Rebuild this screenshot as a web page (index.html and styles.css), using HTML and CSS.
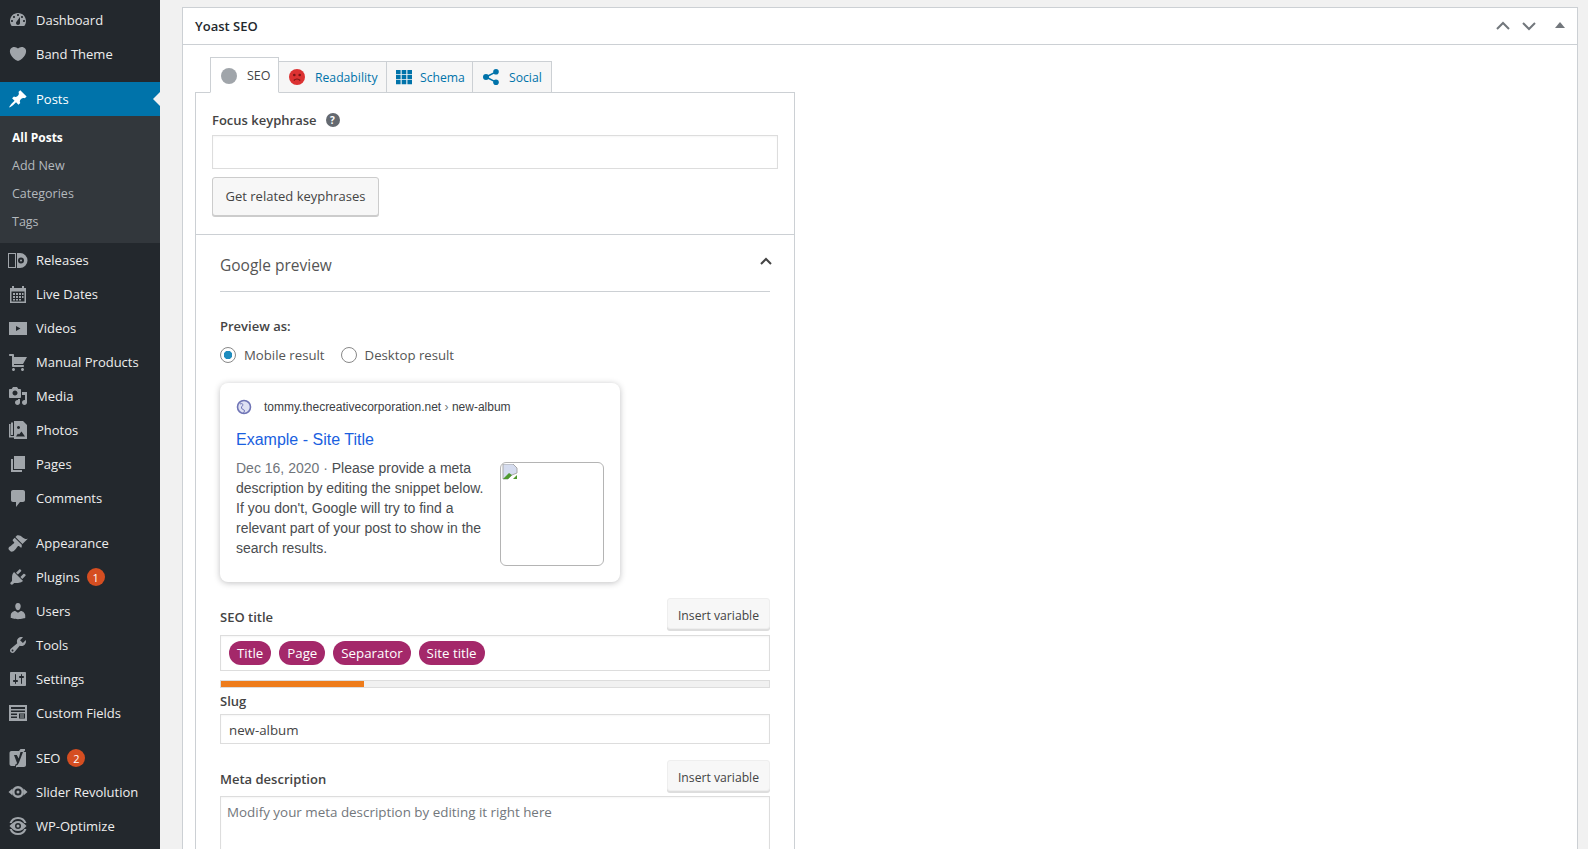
FILE: index.html
```html
<!DOCTYPE html>
<html lang="en">
<head>
<meta charset="utf-8">
<title>Edit Post</title>
<link rel="stylesheet" href="styles.css">
</head>
<body>
<div class="app">
<nav class="sidebar">
  <ul class="menu">
    <li class="item"><svg class="ico" viewBox="0 0 20 20"><path fill-rule="evenodd" d="M3.76 16h12.48c1.1-1.37 1.76-3.11 1.76-5 0-4.42-3.58-8-8-8s-8 3.58-8 8c0 1.89.66 3.63 1.76 5zM10 4c.55 0 1 .45 1 1s-.45 1-1 1-1-.45-1-1 .45-1 1-1zM6 6c.55 0 1 .45 1 1s-.45 1-1 1-1-.45-1-1 .45-1 1-1zm8 0c.55 0 1 .45 1 1s-.45 1-1 1-1-.45-1-1 .45-1 1-1zm-5.37 5.55L12 7v6c0 1.1-.9 2-2 2s-2-.9-2-2c0-.57.24-1.08.63-1.45zM4 10c.55 0 1 .45 1 1s-.45 1-1 1-1-.45-1-1 .45-1 1-1zm12 0c.55 0 1 .45 1 1s-.45 1-1 1-1-.45-1-1 .45-1 1-1z"/></svg>Dashboard</li>
    <li class="item"><svg class="ico" viewBox="0 0 20 20"><path d="M10 17.12c3.33-1.4 5.74-3.79 7.04-6.21 1.28-2.41 1.46-4.81.32-6.25-1.03-1.29-2.37-1.78-3.73-1.74s-2.68.63-3.63 1.46c-.95-.83-2.27-1.42-3.63-1.46s-2.7.45-3.73 1.74c-1.14 1.44-.96 3.84.32 6.25 1.3 2.42 3.71 4.81 7.04 6.21z"/></svg>Band Theme</li>
  </ul>
  <ul class="menu gap">
    <li class="item active"><svg class="ico" viewBox="0 0 20 20"><path d="M10.44 3.02l1.82-1.82 6.36 6.35-1.83 1.82c-1.05-.68-2.48-.57-3.41.36l-.75.75c-.92.93-1.04 2.35-.35 3.41l-1.83 1.82-2.41-2.41-2.8 2.79c-.42.42-3.38 2.71-3.8 2.29s1.86-3.39 2.28-3.81l2.79-2.79L4.1 9.36l1.83-1.82c1.05.69 2.48.57 3.4-.36l.75-.75c.93-.92 1.05-2.35.36-3.41z"/></svg>Posts</li>
    <li class="sub">
      <a class="subitem current">All Posts</a>
      <a class="subitem">Add New</a>
      <a class="subitem">Categories</a>
      <a class="subitem">Tags</a>
    </li>
    <li class="item"><svg class="ico" viewBox="0 0 20 20"><path fill-rule="evenodd" d="M0 3h8v15H0zM1 4v13h6V4zM9 3h3a7.5 7.5 0 0 1 0 15H9zM13 7.5a3 3 0 1 0 0 6 3 3 0 0 0 0-6zM13 9.5a1 1 0 1 1 0 2 1 1 0 0 1 0-2z"/></svg>Releases</li>
    <li class="item"><svg class="ico" viewBox="0 0 20 20"><path fill-rule="evenodd" d="M2 4h2V2h2v2h8V2h2v2h2v15H2zM3.5 7.5v10h13v-10zM5 9h2v2H5zM8 9h2v2H8zM11 9h2v2h-2zM14 9h1.5v2H14zM5 12h2v2H5zM8 12h2v2H8zM11 12h2v2h-2zM14 12h1.5v2H14zM5 15h2v1.5H5zM8 15h2v1.5H8zM11 15h2v1.5h-2z"/></svg>Live Dates</li>
    <li class="item"><svg class="ico" viewBox="0 0 20 20"><path fill-rule="evenodd" d="M1 4h18v13H1zM8 8v5l4.500-2.500z"/></svg>Videos</li>
    <li class="item"><svg class="ico" viewBox="0 0 20 20"><path d="M6 13h9c.55 0 1 .45 1 1s-.45 1-1 1H5c-.55 0-1-.45-1-1V4H2c-.55 0-1-.45-1-1s.45-1 1-1h3c.55 0 1 .45 1 1v2h13l-4 7H6v1zm-.5 3c.83 0 1.500.67 1.500 1.500S6.330 19 5.500 19 4 18.330 4 17.500 4.670 16 5.500 16zm9 0c.83 0 1.500.67 1.500 1.500s-.67 1.500-1.500 1.500-1.500-.67-1.500-1.500.67-1.500 1.500-1.500z"/></svg>Manual Products</li>
    <li class="item"><svg class="ico" viewBox="0 0 20 20"><path fill-rule="evenodd" d="M13 11V4c0-.55-.45-1-1-1h-1.670L9 1H5L3.670 3H2c-.55 0-1 .45-1 1v7c0 .55.45 1 1 1h10c.55 0 1-.45 1-1zM7 4.500c1.380 0 2.500 1.120 2.500 2.500S8.380 9.500 7 9.500 4.500 8.380 4.500 7 5.620 4.500 7 4.500zM14 6h5v10.500c0 1.380-1.120 2.500-2.500 2.500S14 17.880 14 16.500s1.120-2.500 2.500-2.500c.17 0 .34.02.5.05V9h-3V6zm-4 8.050V13h2v3.500c0 1.380-1.120 2.500-2.500 2.500S7 17.880 7 16.500 8.120 14 9.500 14c.17 0 .34.02.5.05z"/></svg>Media</li>
    <li class="item"><svg class="ico" viewBox="0 0 20 20"><path fill-rule="evenodd" d="M6 1h9l4 4v14H6zM10.500 6a1.500 1.500 0 1 0 .01 0zM8 16.500h9l-3.500-5-2.500 3-1-1zM1 4h1.500v12H6v1.500H1zM3 2.500h2V15H3z"/></svg>Photos</li>
    <li class="item"><svg class="ico" viewBox="0 0 20 20"><path d="M6 15V2h11v13H6zm-1 1h9v2H3V5h2v11z"/></svg>Pages</li>
    <li class="item"><svg class="ico" viewBox="0 0 20 20"><path d="M5 2h10c1.100 0 2 .9 2 2v8c0 1.100-.9 2-2 2h-3l-4 5v-5H5c-1.100 0-2-.9-2-2V4c0-1.100.9-2 2-2z"/></svg>Comments</li>
  </ul>
  <ul class="menu gap">
    <li class="item"><svg class="ico" viewBox="0 0 20 20"><path d="M14.480 11.060L7.410 3.990l1.500-1.500c.5-.56 2.300-.47 3.510.32 1.210.8 1.430 1.280 2.910 2.100 1.180.64 2.450 1.260 4.450.85zm-.71.71L6.700 4.700 4.930 6.470c-.39.39-.39 1.020 0 1.410l1.060 1.060c.39.39.39 1.030 0 1.420-.6.6-1.430 1.110-2.210 1.690-.35.26-.7.53-1.010.84C1.430 13.230.5 14.400.5 15.600c0 .45.16.89.48 1.210l1.410 1.410c.32.32.76.48 1.210.48 1.200 0 2.370-.93 3.710-2.270.31-.31.58-.66.84-1.010.58-.78 1.090-1.610 1.690-2.210.39-.39 1.030-.39 1.420 0l1.060 1.060c.39.39 1.020.39 1.410 0z"/></svg>Appearance</li>
    <li class="item"><svg class="ico" viewBox="0 0 20 20"><path d="M13.110 4.360L9.870 7.600 8 5.730l3.240-3.240c.35-.34 1.050-.2 1.560.32.52.51.66 1.210.31 1.550zm-8 1.770l.91-1.120 9.010 9.010-1.190.84c-.71.71-2.630 1.160-3.820 1.160H6.140L4.900 17.260c-.59.59-1.540.59-2.120 0-.59-.58-.59-1.530 0-2.120l1.240-1.240v-3.880c0-1.130.4-3.190 1.090-3.890zm7.260 3.970l3.240-3.240c.34-.35 1.040-.21 1.550.31.52.51.66 1.210.31 1.550l-3.240 3.250z"/></svg>Plugins<span class="badge">1</span></li>
    <li class="item"><svg class="ico" viewBox="0 0 20 20"><path d="M10 9.250c-2.270 0-2.730-3.440-2.730-3.440C7 4.020 7.820 2 9.970 2c2.160 0 2.980 2.020 2.710 3.810 0 0-.41 3.440-2.680 3.440zm0 2.570L12.720 10c2.390 0 4.520 2.330 4.520 4.530v2.490s-3.650 1.130-7.240 1.130c-3.650 0-7.240-1.130-7.240-1.130v-2.490c0-2.250 1.940-4.480 4.470-4.480z"/></svg>Users</li>
    <li class="item"><svg class="ico" viewBox="0 0 20 20"><path fill-rule="evenodd" d="M16.680 9.770c-1.340 1.340-3.300 1.670-4.950.99l-5.410 6.520c-.99.99-2.590.99-3.580 0s-.99-2.590 0-3.570l6.520-5.420c-.68-1.650-.35-3.610.99-4.950 1.280-1.280 3.120-1.620 4.720-1.060l-2.890 2.890 2.820 2.820 2.860-2.870c.53 1.580.18 3.390-1.080 4.650zM3.810 16.210c.4.39 1.040.39 1.430 0 .4-.4.4-1.040 0-1.430-.39-.4-1.030-.4-1.430 0-.39.39-.39 1.030 0 1.430z"/></svg>Tools</li>
    <li class="item"><svg class="ico" viewBox="0 0 20 20"><path fill-rule="evenodd" d="M18 16V4c0-.55-.45-1-1-1H3c-.55 0-1 .45-1 1v12c0 .55.45 1 1 1h14c.55 0 1-.45 1-1zM8 11h1c.55 0 1 .45 1 1s-.45 1-1 1H8v1.500c0 .28-.22.5-.5.5s-.5-.22-.5-.5V13H6c-.55 0-1-.45-1-1s.45-1 1-1h1V5.500c0-.28.22-.5.5-.5s.5.22.5.5V11zm5-2h-1c-.55 0-1-.45-1-1s.45-1 1-1h1V5.500c0-.28.22-.5.5-.5s.5.22.5.5V7h1c.55 0 1 .45 1 1s-.45 1-1 1h-1v5.500c0 .28-.22.5-.5.5s-.5-.22-.5-.5V9z"/></svg>Settings</li>
    <li class="item"><svg class="ico" viewBox="0 0 20 20"><path fill-rule="evenodd" d="M1 2h18v16H1zM3 4v2h14V4zM3 7.500V9h14V7.500zM3 10.500V12h6v-1.500zM11 10.500v5h6v-5zM12 11.500h4v1h-4zM12 13.500h4v1h-4zM3 13.500V15h6v-1.500z"/></svg>Custom Fields</li>
  </ul>
  <ul class="menu gap">
    <li class="item"><svg class="ico" viewBox="0 0 20 20"><path fill-rule="evenodd" d="M3.500 3H11l1.500-2H17v1.500L15.500 4H18v13c0 1-.8 2-2 2H9.500L8 19.500V18H3.500C2.300 18 1.500 17 1.500 16V5c0-1.200.8-2 2-2zM6 7l3 8c-.3 1-1 1.500-2 1.800V18c2-.3 3.200-1.500 4-3.500L15 4h-2.500l-1.800 6.500L8.800 7z"/></svg>SEO<span class="badge">2</span></li>
    <li class="item"><svg class="ico" viewBox="0 0 20 20"><path fill-rule="evenodd" d="M10 4a6 6 0 1 1 0 12 6 6 0 0 1 0-12zM10 6.500a3.500 3.500 0 1 0 0 7 3.500 3.500 0 0 0 0-7z"/><path d="M.5 10l4-3.500v7zM19.500 10l-4-3.500v7z"/><circle cx="10" cy="10" r="1.500"/></svg>Slider Revolution</li>
    <li class="item"><svg class="ico" viewBox="0 0 20 20"><path fill-rule="evenodd" d="M10 1a9 9 0 0 1 8.500 6h-2.200A7 7 0 0 0 3.700 7H1.500A9 9 0 0 1 10 1zM1.500 13h2.200a7 7 0 0 0 12.600 0h2.200a9 9 0 0 1-17 0zM10 5c3 0 6 2 8.500 5-2.500 3-5.500 5-8.500 5s-6-2-8.500-5C4 7 7 5 10 5zM10 7a3 3 0 1 0 0 6 3 3 0 0 0 0-6z"/><circle cx="10" cy="10" r="1.500"/></svg>WP-Optimize</li>
  </ul>
</nav>
<main class="content">
  <section class="metabox">
    <header class="mb-head">
      <h2 class="mb-title">Yoast SEO</h2>
      <div class="mb-actions">
        <svg class="chev" viewBox="0 0 16 10"><path d="M2 8l6-6 6 6"/></svg>
        <svg class="chev" viewBox="0 0 16 10"><path d="M2 2l6 6 6-6"/></svg>
        <span class="tri"></span>
      </div>
    </header>
    <div class="mb-body">
      <div class="tabs">
        <div class="tab on"><span class="dot"></span>SEO</div>
        <div class="tab tab-read"><svg class="tab-ico" viewBox="0 0 16 16"><circle cx="8" cy="8" r="8" fill="#dc3232"/><circle cx="5.300" cy="6" r="1.300" fill="#7a1515"/><circle cx="10.700" cy="6" r="1.300" fill="#7a1515"/><path d="M4.800 11.500c1.800-2 4.600-2 6.400 0" fill="none" stroke="#7a1515" stroke-width="1.200"/></svg>Readability</div>
        <div class="tab tab-schema"><svg class="tab-ico" viewBox="0 0 16 16"><path fill="#0073aa" d="M0 1h4.600v4.200H0zM5.700 1h4.600v4.200H5.700zM11.400 1H16v4.200h-4.600zM0 6h4.600v4.200H0zM5.700 6h4.600v4.200H5.700zM11.400 6H16v4.200h-4.600zM0 11h4.600v4.200H0zM5.700 11h4.600v4.200H5.700zM11.400 11H16v4.200h-4.600z"/></svg>Schema</div>
        <div class="tab tab-social"><svg class="tab-ico" viewBox="0 0 16 16"><circle cx="3" cy="8" r="3" fill="#0073aa"/><circle cx="13" cy="2.800" r="2.800" fill="#0073aa"/><circle cx="13" cy="13.200" r="2.800" fill="#0073aa"/><path d="M3 8l10-5.200M3 8l10 5.200" stroke="#0073aa" stroke-width="1.500"/></svg>Social</div>
      </div>
      <div class="panel">
        <div class="focus">
          <div class="label-row"><label class="label">Focus keyphrase</label><span class="help">?</span></div>
          <div class="field focus-field"></div>
          <button class="btn btn-big">Get related keyphrases</button>
        </div>
        <div class="gp">
          <div class="gp-head"><span>Google preview</span><svg class="gp-chev" viewBox="0 0 14 9"><path d="M2 7l5-5 5 5"/></svg></div>
          <div class="label preview-as">Preview as:</div>
          <div class="radios">
            <span class="radio checked"></span><span class="radio-text">Mobile result</span>
            <span class="radio"></span><span class="radio-text">Desktop result</span>
          </div>
          <div class="card">
            <div class="card-url"><svg class="globe" viewBox="0 0 16 16"><circle cx="8" cy="8" r="6.500" fill="#dfe1f3" stroke="#6f74b5" stroke-width="1.600"/><path d="M4 5c2-1 3 0 3 1s-2 1-1.500 3 3 1 3 3l-1 2" fill="none" stroke="#6f74b5"/></svg><span class="url">tommy.thecreativecorporation.net<span class="crumb"> › </span>new-album</span></div>
            <div class="card-title">Example - Site Title</div>
            <div class="card-main">
              <p class="card-desc"><span class="date">Dec 16, 2020 · </span>Please provide a meta description by editing the snippet below. If you don't, Google will try to find a relevant part of your post to show in the search results.</p>
              <div class="thumb"><svg class="broken" viewBox="0 0 16 16"><path d="M1 0h10l4 4v5l-5 2-4 4H1z" fill="#d5dcef" stroke="#a9a9a9"/><path d="M1 15l6-6 3 2-4 4z" fill="#4e9a2f"/><path d="M11 15l4-4v4z" fill="#4e9a2f"/></svg></div>
            </div>
          </div>
          <div class="row-between first-row">
            <label class="label row-label">SEO title</label>
            <button class="btn btn-small">Insert variable</button>
          </div>
          <div class="field title-field">
            <span class="pill">Title</span><span class="pill">Page</span><span class="pill">Separator</span><span class="pill">Site title</span>
          </div>
          <div class="progress"><div class="progress-bar"></div></div>
          <label class="label slug-label">Slug</label>
          <div class="field slug-field">new-album</div>
          <div class="row-between meta-row">
            <label class="label row-label">Meta description</label>
            <button class="btn btn-small">Insert variable</button>
          </div>
          <div class="field meta-field">Modify your meta description by editing it right here</div>
        </div>
      </div>
    </div>
  </section>
</main>
</div>
</body>
</html>
```
FILE: styles.css
```css
* { box-sizing: border-box; }
html, body { margin: 0; padding: 0; height: 849px; overflow: hidden; }
body { background: #f1f1f1; font-family: "Open Sans", "Noto Sans", sans-serif; font-size: 13px; color: #444; }
.app { display: flex; height: 849px; }
.sidebar { width: 160px; flex: none; background: #23282d; padding-top: 3px; }
.menu { list-style: none; margin: 0; padding: 0; }
.gap { margin-top: 11px; }
.item { position: relative; display: flex; align-items: center; height: 34px; padding-left: 8px; color: #eee; font-size: 13px; white-space: nowrap; }
.ico { width: 20px; height: 20px; margin-right: 8px; fill: #a0a5aa; flex: none; }
.active { background: #0073aa; color: #fff; }
.active .ico { fill: #fff; }
.active::after { content: ""; position: absolute; right: 0; top: 10px; border: 7px solid transparent; border-right-color: #f1f1f1; border-left-width: 0; }
.sub { background: #32373c; display: flex; flex-direction: column; height: 127px; padding-top: 7px; }
.subitem { display: flex; align-items: center; height: 28px; padding-left: 12px; color: #b4b9be; font-size: 12.500px; }
.current { color: #fff; font-weight: 700; font-size: 12px; }
.badge { display: inline-flex; align-items: center; justify-content: center; width: 18px; height: 18px; margin-left: 7px; border-radius: 50%; background: #d54e21; color: #fff; font-size: 11px; }
.content { flex: none; width: 1428px; padding: 7px 10px 0 22px; }
.metabox { width: 1396px; height: 860px; background: #fff; border: 1px solid #ccd0d4; }
.mb-head { display: flex; align-items: center; justify-content: space-between; height: 37px; border-bottom: 1px solid #ccd0d4; padding: 0 12px; }
.mb-title { margin: 0; font-size: 13px; font-weight: 600; color: #23282d; }
.mb-actions { display: flex; align-items: center; }
.chev { width: 16px; height: 10px; fill: none; stroke: #72777c; stroke-width: 2; margin-right: 10px; }
.tri { width: 0; height: 0; margin: 0 0 2px 8px; border: 5px solid transparent; border-top: 0; border-bottom: 6px solid #72777c; }
.mb-body { padding: 12px 0 0 12px; }
.tabs { display: flex; align-items: flex-end; margin-left: 15px; margin-bottom: -1px; position: relative; height: 36px; }
.tab { display: flex; align-items: center; height: 32px; padding: 0 0 0 10px; background: #f6f6f6; border: 1px solid #ccd0d4; border-left: 0; color: #0073aa; font-size: 12.200px; white-space: nowrap; }
.tab.on { height: 36px; width: 69px; background: #fff; border-left: 1px solid #ccd0d4; border-bottom-color: #fff; color: #444; font-size: 12.500px; padding: 1px 0 0 10px; }
.tab-read { width: 108px; }
.tab-schema { width: 86px; padding-left: 9px; }
.tab-social { width: 79px; }
.dot { width: 16px; height: 16px; border-radius: 50%; background: #a0a5aa; margin-right: 10px; }
.tab-ico { width: 16px; height: 16px; margin-right: 10px; }
.tab-schema .tab-ico { margin-right: 8px; }
.panel { width: 600px; border: 1px solid #ccd0d4; background: #fff; }
.focus { padding: 17px 16px 18px; border-bottom: 1px solid #ccd0d4; }
.label-row { display: flex; align-items: center; }
.label { display: block; font-size: 13px; font-weight: 600; line-height: 20px; color: #444; }
.help { display: inline-flex; align-items: center; justify-content: center; width: 14px; height: 14px; margin-left: 9px; border-radius: 50%; background: #646970; color: #fff; font-size: 10px; font-weight: 700; }
.field { border: 1px solid #ddd; box-shadow: inset 0 1px 2px rgba(0,0,0,.04); background: #fff; }
.focus-field { width: 566px; height: 34px; margin-top: 5px; }
.btn { display: block; font: inherit; background: #f7f7f7; border: 1px solid #ccc; border-radius: 3px; box-shadow: 0 1px 0 #ccc; color: #444; padding: 0; }
.btn-big { width: 167px; height: 39px; margin-top: 8px; padding-bottom: 2px; }
.btn-small { width: 103px; height: 31px; font-size: 12.200px; border-color: #eee; box-shadow: 0 2px 0 #ddd; padding-top: 3px; }
.gp { padding: 0 24px; }
.gp-head { display: flex; align-items: center; justify-content: space-between; height: 57px; padding-top: 3px; border-bottom: 1px solid #ccd0d4; font-size: 15.500px; color: #555; }
.gp-chev { width: 14px; height: 9px; margin: 0 -3px 6px 0; fill: none; stroke: #444; stroke-width: 2; }
.preview-as { margin-top: 24px; }
.radios { display: flex; align-items: center; margin-top: 9px; height: 20px; }
.radio { width: 16px; height: 16px; border: 1px solid #888; border-radius: 50%; background: #fff; margin-right: 8px; }
.radio.checked { background: radial-gradient(circle, #1e8cbe 0 4px, #fff 4.500px); }
.radio-text { margin-right: 16px; color: #555; font-size: 13.200px; }
.card { width: 400px; margin-top: 18px; padding: 14px 16px 16px; border-radius: 8px; background: #fff; box-shadow: 0 1px 6px rgba(32,33,36,.28); font-family: "Liberation Sans", Arial, sans-serif; }
.card-url { display: flex; align-items: center; height: 20px; }
.globe { width: 16px; height: 16px; margin-right: 12px; }
.url { font-size: 12px; color: #3c4043; }
.crumb { color: #70757a; }
.card-title { margin-top: 12px; font-size: 16px; line-height: 22px; color: #1a5fe0; }
.card-main { display: flex; align-items: flex-start; margin-top: 7px; }
.card-desc { margin: 0; width: 250px; font-size: 14px; line-height: 20px; color: #4a4d50; }
.date { color: #70757a; }
.thumb { width: 104px; height: 104px; margin: 4px 0 0 14px; border: 1px solid #b4b4b4; border-radius: 6px; padding: 1px; }
.broken { display: block; width: 16px; height: 16px; }
.row-between { display: flex; align-items: flex-end; justify-content: space-between; }
.first-row { margin-top: 16px; }
.meta-row { margin-top: 16px; }
.row-label { margin-bottom: 2px; }
.title-field { display: flex; align-items: center; height: 36px; margin-top: 6px; padding-left: 8px; }
.pill { display: inline-block; height: 24px; line-height: 24px; padding: 0 8px; margin-right: 8px; border-radius: 12px; background: #a4286a; color: #fff; font-size: 13.300px; }
.progress { height: 8px; margin-top: 9px; background: #f1f1f1; border: 1px solid #ddd; }
.progress-bar { width: 143px; height: 6px; background: #ee7c1b; }
.slug-label { margin-top: 3px; }
.slug-field { display: flex; align-items: center; height: 30px; margin-top: 3px; padding: 2px 0 0 8px; color: #444; font-size: 13.300px; }
.meta-field { height: 90px; margin-top: 5px; padding: 6px 6px; color: #72777c; font-size: 13.400px; }
```
